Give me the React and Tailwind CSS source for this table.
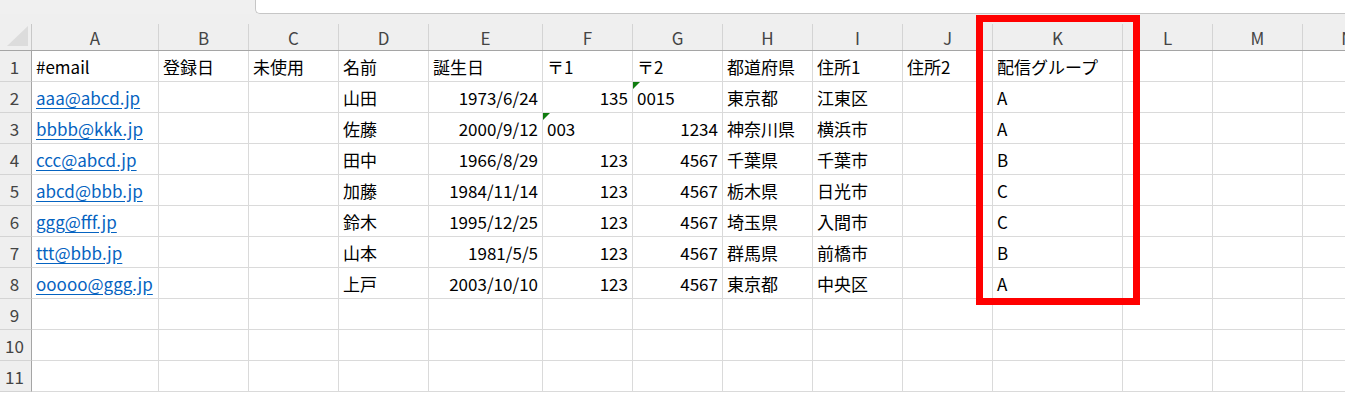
import React from 'react';

const font = { fontFamily: '"Noto Sans CJK JP", "Noto Sans", sans-serif' };

const cols = ['A', 'B', 'C', 'D', 'E', 'F', 'G', 'H', 'I', 'J', 'K', 'L', 'M', 'N'];
const widths = ['w-[127px]', 'w-[90px]', 'w-[90px]', 'w-[90px]', 'w-[114px]', 'w-[90px]', 'w-[90px]', 'w-[90px]', 'w-[90px]', 'w-[90px]', 'w-[130px]', 'w-[90px]', 'w-[90px]', 'w-[90px]'];

// cell: string | { v, right, link, tri }
const rows = [
  ['#email', '登録日', '未使用', '名前', '誕生日', '〒1', '〒2', '都道府県', '住所1', '住所2', '配信グループ'],
  [{ v: 'aaa@abcd.jp', link: true }, '', '', '山田', { v: '1973/6/24', right: true }, { v: '135', right: true }, { v: '0015', tri: true }, '東京都', '江東区', '', 'A'],
  [{ v: 'bbbb@kkk.jp', link: true }, '', '', '佐藤', { v: '2000/9/12', right: true }, { v: '003', tri: true }, { v: '1234', right: true }, '神奈川県', '横浜市', '', 'A'],
  [{ v: 'ccc@abcd.jp', link: true }, '', '', '田中', { v: '1966/8/29', right: true }, { v: '123', right: true }, { v: '4567', right: true }, '千葉県', '千葉市', '', 'B'],
  [{ v: 'abcd@bbb.jp', link: true }, '', '', '加藤', { v: '1984/11/14', right: true }, { v: '123', right: true }, { v: '4567', right: true }, '栃木県', '日光市', '', 'C'],
  [{ v: 'ggg@fff.jp', link: true }, '', '', '鈴木', { v: '1995/12/25', right: true }, { v: '123', right: true }, { v: '4567', right: true }, '埼玉県', '入間市', '', 'C'],
  [{ v: 'ttt@bbb.jp', link: true }, '', '', '山本', { v: '1981/5/5', right: true }, { v: '123', right: true }, { v: '4567', right: true }, '群馬県', '前橋市', '', 'B'],
  [{ v: 'ooooo@ggg.jp', link: true }, '', '', '上戸', { v: '2003/10/10', right: true }, { v: '123', right: true }, { v: '4567', right: true }, '東京都', '中央区', '', 'A'],
  [],
  [],
  [],
];

const Cell = ({ cell, width }) => {
  const c = typeof cell === 'string' || cell === undefined ? { v: cell || '' } : cell;
  return (
    <div
      className={`relative shrink-0 ${width} h-[31px] border-r border-b border-[#dadada] flex items-center px-[4px] whitespace-nowrap overflow-visible ${
        c.right ? 'justify-end' : 'justify-start'
      }`}
    >
      {c.tri && (
        <span className="absolute left-0 top-0 w-0 h-0 border-t-[7px] border-r-[7px] border-t-[#107c10] border-r-transparent" />
      )}
      <span className={c.link ? 'text-[#0563c1] underline underline-offset-[3px]' : 'text-black'}>{c.v}</span>
    </div>
  );
};

export default function App() {
  return (
    <div className="relative w-[1345px] h-[393px] overflow-hidden bg-white text-[17px] leading-none" style={font}>
      {/* formula bar strip */}
      <div className="h-[14px] bg-[#f0f0f0] flex">
        <div className="w-[255px]" />
        <div className="flex-1 bg-white border-l border-b border-[#c6c6c6] rounded-bl-[5px]" />
      </div>

      {/* column headers */}
      <div className="flex h-[37px] bg-[#efefef] border-b border-[#a5a5a5]">
        <div className="shrink-0 w-[32px] border-r border-[#c8c8c8] flex items-end justify-end pb-[4px] pr-[3px] mt-[10px]">
          <span className="w-0 h-0 border-l-[21px] border-b-[20px] border-l-transparent border-b-[#dcdcdc]" />
        </div>
        {cols.map((c, i) => (
          <div
            key={c}
            className={`shrink-0 ${widths[i]} mt-[10px] border-r border-[#d4d4d4] flex items-center justify-center text-[#444]`}
          >
            {c}
          </div>
        ))}
      </div>

      {/* rows */}
      {rows.map((r, ri) => (
        <div key={ri} className="flex">
          <div className="shrink-0 w-[32px] h-[31px] bg-[#efefef] border-r border-r-[#a5a5a5] border-b border-b-[#d4d4d4] flex items-center justify-center text-[#444] pr-[2px]">
            {ri + 1}
          </div>
          {cols.map((c, ci) => (
            <Cell key={c} cell={r[ci]} width={widths[ci]} />
          ))}
        </div>
      ))}

      {/* highlight box */}
      <div className="absolute left-[976px] top-[15px] w-[164px] h-[290px] border-[7px] border-[#ff0000] pointer-events-none" />
    </div>
  );
}
